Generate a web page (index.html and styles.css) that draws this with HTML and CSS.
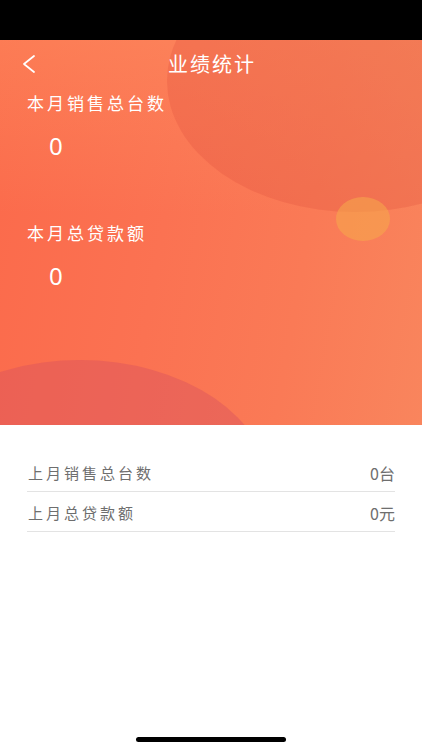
FILE: index.html
```html
<!DOCTYPE html>
<html lang="zh-CN">
<head>
<meta charset="utf-8">
<title>业绩统计</title>
<link rel="stylesheet" href="styles.css">
</head>
<body>
<div class="page">
  <div class="statusbar"></div>
  <section class="hero">
    <div class="deco deco-big"></div>
    <div class="deco deco-dot"></div>
    <div class="deco deco-low"></div>
    <header class="nav">
      <span class="back" aria-label="返回">
        <svg width="16" height="20" viewBox="0 0 16 20"><path d="M13 2 L3 10 L13 18" fill="none" stroke="#fff" stroke-width="1.8" stroke-linecap="round" stroke-linejoin="round"/></svg>
      </span>
      <h1 class="title">业绩统计</h1>
    </header>
    <div class="stat">
      <div class="stat-label">本月销售总台数</div>
      <div class="stat-value">0</div>
    </div>
    <div class="stat stat-second">
      <div class="stat-label">本月总贷款额</div>
      <div class="stat-value">0</div>
    </div>
  </section>
  <ul class="list">
    <li class="row"><span class="row-label">上月销售总台数</span><span class="row-value">0台</span></li>
    <li class="row"><span class="row-label">上月总贷款额</span><span class="row-value">0元</span></li>
  </ul>
  <div class="home-indicator"></div>
</div>
</body>
</html>
```

FILE: styles.css
```css
* { box-sizing: border-box; }
html, body { margin: 0; padding: 0; }
body {
  font-family: "Noto Sans CJK SC", "Noto Sans", sans-serif;
  background: #fff;
}
.page {
  width: 422px;
  height: 750px;
  display: flex;
  flex-direction: column;
  overflow: hidden;
}
.statusbar {
  height: 40px;
  background: #000;
  flex: none;
}
.hero {
  position: relative;
  height: 385px;
  flex: none;
  overflow: hidden;
  color: #fff;
  background:
    linear-gradient(180deg, rgba(255,170,110,0.28) 0%, rgba(255,170,110,0) 45%),
    linear-gradient(100deg, #fb6a4b 0%, #fb7252 40%, #fa7a56 70%, #f9855d 100%);
}
.deco {
  position: absolute;
  border-radius: 50%;
  pointer-events: none;
}
.deco-big {
  left: 167px;
  top: -90px;
  width: 376px;
  height: 262px;
  background: rgba(226, 82, 62, 0.3);
}
.deco-dot {
  left: 336px;
  top: 157px;
  width: 54px;
  height: 44px;
  background: rgba(246, 170, 74, 0.55);
}
.deco-low {
  left: -110px;
  top: 320px;
  width: 380px;
  height: 260px;
  background: rgba(214, 80, 96, 0.42);
}
.nav {
  position: relative;
  height: 50px;
  display: flex;
  align-items: center;
  justify-content: center;
}
.back {
  position: absolute;
  left: 21px;
  top: 14px;
  width: 16px;
  height: 20px;
  display: flex;
}
.title {
  margin: 0;
  font-size: 20px;
  font-weight: 400;
  letter-spacing: 2px;
  line-height: 26px;
  padding-left: 2px;
  margin-top: -2px;
}
.stat {
  position: relative;
  padding-left: 27px;
}
.stat-label {
  font-size: 17px;
  line-height: 26px;
  letter-spacing: 3px;
}
.stat-value {
  margin-top: 15px;
  padding-left: 22px;
  font-family: "Noto Sans", sans-serif;
  font-size: 24px;
  line-height: 30px;
}
.stat-second { margin-top: 59px; }
.stat-second .stat-value { margin-top: 15px; }
.list {
  list-style: none;
  margin: 27px 27px 0;
  padding: 0;
}
.row {
  display: flex;
  justify-content: space-between;
  align-items: center;
  padding: 11px 0 8px;
  border-bottom: 1px solid #e3e3e3;
  font-size: 15px;
  line-height: 20px;
  color: #6e6e6e;
}
.row-label { letter-spacing: 3px; padding-left: 1px; }
.row-value { font-size: 16px; }
.home-indicator {
  margin: auto auto 8px;
  width: 150px;
  height: 5px;
  border-radius: 3px;
  background: #000;
  flex: none;
}
```
